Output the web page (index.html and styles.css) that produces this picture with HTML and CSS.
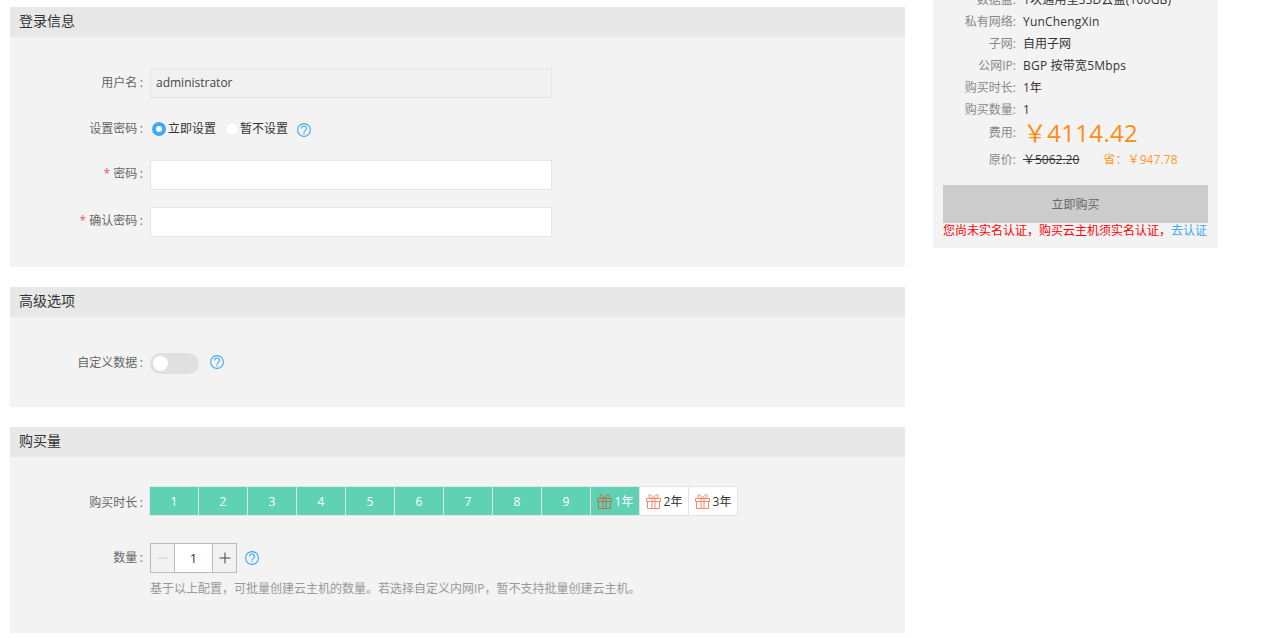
FILE: index.html
```html
<!DOCTYPE html>
<html lang="zh-CN">
<head>
<meta charset="utf-8">
<title>购买云主机</title>
<link rel="stylesheet" href="styles.css">
</head>
<body>
<svg class="defs" width="0" height="0" aria-hidden="true">
  <symbol id="help" viewBox="0 0 14 14">
    <circle cx="7" cy="7" r="6.400" fill="none" stroke="currentColor" stroke-width="1.100"/>
    <path d="M4.500 5.400a2.500 2.400 0 1 1 3.900 2c-.9.600-1.400 1-1.400 2M7 10v1.300" fill="none" stroke="currentColor" stroke-width="1.100"/>
  </symbol>
  <symbol id="gift" viewBox="0 0 15 15">
    <path d="M.5 4.500h14v3H.5zM1.500 7.500h12v7h-12zM6 4.500v10M9 4.500v10M7.500 4.500C6.500 1.500 3.500-.2 2.700 1.200c-.7 1.500 2 3.300 4.800 3.300zM7.500 4.500C8.500 1.500 11.500-.2 12.300 1.200c.7 1.500-2 3.300-4.800 3.300z" fill="none" stroke="currentColor"/>
  </symbol>
  <symbol id="minus" viewBox="0 0 12 12"><path d="M1 6h10" stroke="currentColor" fill="none"/></symbol>
  <symbol id="plus" viewBox="0 0 12 12"><path d="M.5 6h11M6 .5v11" stroke="currentColor" fill="none"/></symbol>
</svg>
<div class="page">
  <main class="main">
    <section class="panel">
      <h2 class="panel-title">登录信息</h2>
      <div class="panel-body">
        <div class="row">
          <label class="label">用户名<span class="colon">:</span></label>
          <div class="input input-disabled">administrator</div>
        </div>
        <div class="row">
          <label class="label">设置密码<span class="colon">:</span></label>
          <span class="radio radio-on"></span><span class="radio-text">立即设置</span>
          <span class="radio radio-off"></span><span class="radio-text">暂不设置</span>
          <svg class="help help-radio"><use href="#help"/></svg>
        </div>
        <div class="row row-tight">
          <label class="label label-up"><span class="req">*</span> 密码<span class="colon">:</span></label>
          <div class="input"></div>
        </div>
        <div class="row">
          <label class="label label-up"><span class="req">*</span> 确认密码<span class="colon">:</span></label>
          <div class="input"></div>
        </div>
      </div>
    </section>
    <section class="panel">
      <h2 class="panel-title">高级选项</h2>
      <div class="panel-body panel-body-short">
        <div class="row">
          <label class="label">自定义数据<span class="colon">:</span></label>
          <span class="toggle"><span class="knob"></span></span>
          <svg class="help help-toggle"><use href="#help"/></svg>
        </div>
      </div>
    </section>
    <section class="panel">
      <h2 class="panel-title">购买量</h2>
      <div class="panel-body panel-body-buy">
        <div class="row">
          <label class="label label-down">购买时长<span class="colon">:</span></label>
          <div class="segments">
            <span class="seg seg-on">1</span>
            <span class="seg seg-on">2</span>
            <span class="seg seg-on">3</span>
            <span class="seg seg-on">4</span>
            <span class="seg seg-on">5</span>
            <span class="seg seg-on">6</span>
            <span class="seg seg-on">7</span>
            <span class="seg seg-on">8</span>
            <span class="seg seg-on">9</span>
            <span class="seg seg-on seg-gift"><svg class="gift gift-dark"><use href="#gift"/></svg>1年</span>
            <span class="seg seg-gift"><svg class="gift"><use href="#gift"/></svg>2年</span>
            <span class="seg seg-gift"><svg class="gift"><use href="#gift"/></svg>3年</span>
          </div>
        </div>
        <div class="row">
          <label class="label">数量<span class="colon">:</span></label>
          <div class="stepper">
            <span class="step step-off"><svg class="step-icon"><use href="#minus"/></svg></span>
            <span class="step-value">1</span>
            <span class="step"><svg class="step-icon"><use href="#plus"/></svg></span>
          </div>
          <svg class="help help-step"><use href="#help"/></svg>
        </div>
        <p class="hint">基于以上配置&#xFF0C;可批量创建云主机的数量。若选择自定义内网IP&#xFF0C;暂不支持批量创建云主机。</p>
      </div>
    </section>
  </main>
  <aside class="summary">
    <dl class="specs">
      <div class="spec"><dt>数据盘:</dt><dd class="wide">1块通用型SSD云盘(100GB)</dd></div>
      <div class="spec"><dt>私有网络:</dt><dd class="wide">YunChengXin</dd></div>
      <div class="spec"><dt>子网:</dt><dd>自用子网</dd></div>
      <div class="spec"><dt>公网IP:</dt><dd class="wide">BGP 按带宽5Mbps</dd></div>
      <div class="spec"><dt>购买时长:</dt><dd>1年</dd></div>
      <div class="spec"><dt>购买数量:</dt><dd>1</dd></div>
      <div class="spec spec-fee"><dt>费用:</dt><dd class="fee">&#xFFE5;4114.42</dd></div>
      <div class="spec spec-old"><dt>原价:</dt><dd><s class="old">&#xFFE5;5062.20</s><span class="save">省&#xFF1A;&#xFFE5;947.78</span></dd></div>
    </dl>
    <button class="buy" type="button">立即购买</button>
    <p class="notice">您尚未实名认证&#xFF0C;购买云主机须实名认证&#xFF0C;<a class="notice-link">去认证</a></p>
  </aside>
</div>
</body>
</html>
```
FILE: styles.css
```css
* { box-sizing: border-box; }
html, body { margin: 0; height: 100%; overflow: hidden; background: #fff; }
body {
  font-family: "Open Sans", "Noto Sans CJK SC", sans-serif;
  font-size: 12px;
  color: #333;
}
.defs { display: block; height: 0; }
.page { display: flex; align-items: flex-start; gap: 28px; padding-left: 10px; }
.main { width: 895px; flex: none; padding-top: 7px; display: flex; flex-direction: column; gap: 20px; }
.panel { background: #f3f3f3; }
.panel-title {
  margin: 0;
  height: 30px;
  padding-left: 9px;
  background: #e8e8e8;
  font-size: 14px;
  font-weight: 400;
  line-height: 28px;
  color: #333;
}
.panel-body { padding: 31px 0 30px; display: flex; flex-direction: column; gap: 16px; }
.panel-body-short { padding-bottom: 29px; }
.panel-body-buy { padding: 29px 0 36px; gap: 27px; }
.row { display: flex; align-items: center; height: 30px; }
.row-tight { margin-bottom: 1px; }
.label { width: 133px; flex: none; margin: 0 7px 2px 0; text-align: right; color: #666; }
.label-up { margin-bottom: 4px; }
.label-down { margin: 2px 7px 0 0; }
.colon { margin-left: 2.500px; }
.req { color: #e4576a; }
.input { width: 402px; height: 30px; padding-left: 5px; background: #fff; border: 1px solid #e6e6e6; line-height: 28px; }
.input-disabled { background: #f1f1f1; color: #444; }
.radio { width: 14px; height: 14px; flex: none; border-radius: 50%; margin-bottom: 1px; }
.radio-on { display: flex; align-items: center; justify-content: center; margin-left: 2px; margin-right: 2px; background: #3fa9f5; }
.radio-on::after { content: ""; width: 6px; height: 6px; border-radius: 50%; background: #fff; }
.radio-off { margin-left: 9px; margin-right: 1px; background: #fff; border: 1px solid #e6e9ee; }
.radio-text { margin-bottom: 2px; color: #333; }
.help { width: 14px; height: 14px; flex: none; color: #3fa9f5; }
.help-radio { margin: 2px 0 0 9px; }
.help-toggle { margin: -2px 0 0 11px; }
.help-step { margin-left: 8px; }
.toggle { width: 49px; height: 21px; display: flex; align-items: center; padding-left: 3px; border-radius: 11px; background: #e0e0e0; }
.knob { width: 15px; height: 15px; border-radius: 50%; background: #fff; }
.segments { display: flex; height: 30px; margin-left: -1px; border: 1px solid #e0e4ea; background: #fff; }
.seg { width: 49px; flex: none; display: flex; align-items: center; justify-content: center; border-left: 1px solid #e0e4ea; color: #333; }
.seg:first-child { width: 48px; border-left: 0; }
.seg-on { background: #5fd2b4; color: #fff; }
.seg-gift { gap: 3px; }
.gift { width: 15px; height: 15px; flex: none; color: #f5896a; }
.gift-dark { color: #bf6e48; }
.stepper { display: flex; width: 87px; height: 30px; border: 1px solid #bbb; }
.step { width: 23px; flex: none; display: flex; align-items: center; justify-content: center; background: #f2f2f2; color: #444; }
.step-off { color: #ccc; }
.step-icon { width: 12px; height: 12px; }
.step-value { flex: 1; display: flex; align-items: center; justify-content: center; background: #fff; border-left: 1px solid #bbb; border-right: 1px solid #bbb; font-size: 13px; }
.hint { margin: -19px 0 0 140px; line-height: 16px; color: #999; }
.summary { width: 285px; flex: none; margin-top: -11px; padding: 0 10px 7px; background: #f3f3f3; }
.specs { margin: 0; }
.spec { display: flex; height: 22px; line-height: 22px; }
.spec dt { width: 73px; flex: none; margin-right: 7px; text-align: right; color: #888; }
.spec dd { margin: 0; color: #333; white-space: nowrap; }
.spec .wide { letter-spacing: .2px; }
.spec-fee { height: 24px; line-height: 24px; }
.spec-old { height: 30px; line-height: 30px; }
.spec .fee { font-size: 24px; letter-spacing: .3px; color: #ff8c12; }
.old { color: #333; }
.save { margin-left: 24px; letter-spacing: .1px; color: #ff9a2e; }
.buy { display: block; width: 265px; height: 38px; margin-top: 10px; padding: 0; border: 0; background: #ccc; color: #666; font: inherit; font-size: 12px; }
.notice { margin: 0; height: 18px; line-height: 16px; color: #f00; white-space: nowrap; }
.notice-link { color: #3fa9f5; }
```
